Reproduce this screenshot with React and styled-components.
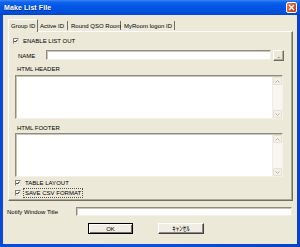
import React from "react";
import styled, { createGlobalStyle } from "styled-components";

const Global = createGlobalStyle`
  html, body { margin: 0; padding: 0; background: #ECE9D8; }
  body { font-family: "Liberation Sans", Arial, sans-serif; }
  * { box-sizing: border-box; }
`;

const Window = styled.div`
  width: 300px;
  height: 247px;
  display: flex;
  flex-direction: column;
  background: linear-gradient(90deg, #0A4AD8, #0A50DE 50%, #0742C8);
  overflow: hidden;
`;

const TitleBar = styled.div`
  height: 15px;
  flex: none;
  display: flex;
  align-items: center;
  justify-content: space-between;
  padding: 0 3px 0 4px;
  background: linear-gradient(#3A86F2 0%, #0F62EC 15%, #0055E4 45%, #0052DE 80%, #0445CC 100%);
`;

const Title = styled.span`
  color: #fff;
  font-weight: bold;
  font-size: 7px;
  line-height: 8px;
  letter-spacing: 0.1px;
  text-shadow: 0.5px 0.5px 0 #0B2A8A;
  white-space: nowrap;
`;

const CloseButton = styled.div`
  width: 11px;
  height: 11px;
  border: 1px solid #fff;
  border-radius: 2px;
  background: linear-gradient(135deg, #F08A62, #E1542C 45%, #C8401C);
  display: flex;
  align-items: center;
  justify-content: center;
`;

const Body = styled.div`
  flex: 1;
  margin: 0 3px 3px;
  background: #ECE9D8;
  display: flex;
  flex-direction: column;
  padding: 4px 4px 0 4px;
`;

const TabRow = styled.div`
  height: 12px;
  flex: none;
  display: flex;
  margin-left: 1px;
  position: relative;
  z-index: 1;
`;

const Tab = styled.div`
  width: ${(p) => p.$w}px;
  display: flex;
  align-items: center;
  padding-left: ${(p) => p.$pl}px;
  font-size: 6px;
  line-height: 6px;
  color: #000;
  white-space: nowrap;
  background: #ECE9D8;
  ${(p) =>
    p.$active
      ? `
    height: 13px;
    border-top: 1px solid #fff;
    border-left: 1px solid #fff;
    border-right: 1px solid #716F64;
    border-top-left-radius: 1px;
  `
      : `
    height: 9px;
    margin-top: 2px;
    border-right: 1px solid #716F64;
  `}
`;

const Panel = styled.div`
  margin-left: 1px;
  width: 285px;
  height: 170px;
  flex: none;
  border: 1px solid;
  border-color: #fff #716F64 #716F64 #fff;
  box-shadow: inset -1px -1px 0 #ACA899;
  display: flex;
  flex-direction: column;
  padding: 6px 0 0 6px;
`;

const CheckRow = styled.div`
  height: 6px;
  flex: none;
  display: flex;
  align-items: center;
  gap: 4px;
  margin-top: ${(p) => p.$mt || 0}px;
  margin-left: ${(p) => p.$ml || 0}px;
`;

const Box = styled.span`
  width: 6px;
  height: 6px;
  flex: none;
  background: #fff;
  border: 1px solid;
  border-color: #808080 #E6E3D6 #E6E3D6 #808080;
  display: flex;
  align-items: center;
  justify-content: center;
`;

const Text = styled.span`
  font-size: 6px;
  line-height: 6px;
  color: #000;
  white-space: nowrap;
  ${(p) => (p.$focus ? "outline: 1px dotted #555; outline-offset: 1px;" : "")}
`;

const NameRow = styled.div`
  margin-top: 6px;
  height: 11px;
  flex: none;
  display: flex;
  align-items: center;
`;

const FieldLabel = styled.span`
  width: ${(p) => p.$w}px;
  flex: none;
  padding-left: ${(p) => p.$pl || 0}px;
  font-size: 6px;
  line-height: 6px;
  white-space: nowrap;
  color: #000;
`;

const Input = styled.div`
  width: ${(p) => p.$w}px;
  height: ${(p) => p.$h}px;
  flex: none;
  align-self: ${(p) => p.$self || "center"};
  background: #fff;
  border: 1px solid;
  border-color: #8E8C82 #F4F2E8 #F4F2E8 #8E8C82;
  box-shadow: inset 1px 1px 0 #C9C6B8;
`;

const SmallButton = styled.div`
  width: 11px;
  height: 11px;
  flex: none;
  margin-left: 2px;
  background: #ECE9D8;
  border: 1px solid;
  border-color: #fff #716F64 #716F64 #fff;
  box-shadow: inset -1px -1px 0 #ACA899;
  display: flex;
  align-items: flex-end;
  justify-content: center;
  padding-bottom: 2px;
  font-size: 5px;
  line-height: 4px;
  color: #000;
  letter-spacing: -0.5px;
`;

const SectionLabel = styled.div`
  height: 8px;
  flex: none;
  margin-top: ${(p) => p.$mt}px;
  margin-left: 2px;
  font-size: 6px;
  line-height: 8px;
  color: #000;
  white-space: nowrap;
`;

const TextBox = styled.div`
  margin-top: ${(p) => p.$mt}px;
  width: 268px;
  height: 44px;
  flex: none;
  display: flex;
  background: #fff;
  border: 1px solid;
  border-color: #8E8C82 #F4F2E8 #F4F2E8 #8E8C82;
  box-shadow: inset 1px 1px 0 #C9C6B8;
`;

const TextArea = styled.div`
  flex: 1;
`;

const ScrollBar = styled.div`
  width: 10px;
  margin: 1px 0 0;
  background: #F7F6F0;
  border-left: 1px solid #EFEDE4;
  display: flex;
  flex-direction: column;
  justify-content: space-between;
`;

const ScrollArrow = styled.div`
  height: 8px;
  background: #F3F1E8;
  border: 1px solid #E4E1D5;
  border-radius: 1px;
  display: flex;
  align-items: center;
  justify-content: center;
`;

const NotifyRow = styled.div`
  margin-top: 6px;
  height: 9px;
  flex: none;
  display: flex;
  align-items: center;
`;

const ButtonRow = styled.div`
  margin-top: 7px;
  display: flex;
  gap: 25px;
  padding-left: 81px;
`;

const Button = styled.div`
  width: ${(p) => p.$w}px;
  height: 11px;
  display: flex;
  align-items: center;
  justify-content: center;
  background: #F0EEE4;
  font-size: 6px;
  line-height: 6px;
  color: #000;
  font-family: "Liberation Sans", "Noto Sans CJK JP", sans-serif;
  border: 1px solid;
  ${(p) =>
    p.$default
      ? `border-color: #000; box-shadow: inset 1px 1px 0 #fff, inset -1px -1px 0 #716F64;`
      : `border-color: #fff #404040 #404040 #fff; box-shadow: inset -1px -1px 0 #8E8C82;`}
`;

const Kana = styled.span`
  font-family: "Noto Sans CJK JP", sans-serif;
  font-size: 7px;
  line-height: 7px;
`;

const Check = () => (
  <svg width="4" height="4" viewBox="0 0 4 4">
    <polyline points="0.3,1.9 1.4,3.1 3.7,0.6" fill="none" stroke="#000" strokeWidth="1" />
  </svg>
);

const Arrow = ({ up }) => (
  <svg width="5" height="3" viewBox="0 0 5 3">
    <polyline
      points={up ? "0.5,2.5 2.5,0.5 4.5,2.5" : "0.5,0.5 2.5,2.5 4.5,0.5"}
      fill="none"
      stroke="#B9B6A8"
      strokeWidth="1"
    />
  </svg>
);

const MultiLine = ({ mt }) => (
  <TextBox $mt={mt}>
    <TextArea />
    <ScrollBar>
      <ScrollArrow>
        <Arrow up />
      </ScrollArrow>
      <ScrollArrow>
        <Arrow />
      </ScrollArrow>
    </ScrollBar>
  </TextBox>
);

export default function App() {
  return (
    <>
      <Global />
      <Window>
        <TitleBar>
          <Title>Make List File</Title>
          <CloseButton>
            <svg width="7" height="7" viewBox="0 0 7 7">
              <path d="M1 1 L6 6 M6 1 L1 6" stroke="#fff" strokeWidth="1.4" />
            </svg>
          </CloseButton>
        </TitleBar>
        <Body>
          <TabRow>
            <Tab $active $w={30} $pl={2}>Group ID</Tab>
            <Tab $w={30} $pl={2}>Active ID</Tab>
            <Tab $w={53} $pl={3}>Round QSO Room</Tab>
            <Tab $w={54} $pl={3}>MyRoom logon ID</Tab>
          </TabRow>
          <Panel>
            <CheckRow $ml={-2}>
              <Box><Check /></Box>
              <Text>ENABLE LIST OUT</Text>
            </CheckRow>
            <NameRow>
              <FieldLabel $w={31} $pl={3}>NAME</FieldLabel>
              <Input $w={225} $h={10} $self="flex-start" />
              <SmallButton>...</SmallButton>
            </NameRow>
            <SectionLabel $mt={4}>HTML HEADER</SectionLabel>
            <MultiLine mt={2} />
            <SectionLabel $mt={5}>HTML FOOTER</SectionLabel>
            <MultiLine mt={1} />
            <CheckRow $mt={3}>
              <Box><Check /></Box>
              <Text>TABLE LAYOUT</Text>
            </CheckRow>
            <CheckRow $mt={4}>
              <Box><Check /></Box>
              <Text $focus>SAVE CSV FORMAT</Text>
            </CheckRow>
          </Panel>
          <NotifyRow>
            <FieldLabel $w={69}>Notify Window Title</FieldLabel>
            <Input $w={216} $h={9} />
          </NotifyRow>
          <ButtonRow>
            <Button $w={45} $default>OK</Button>
            <Button $w={46}><Kana>ｷｬﾝｾﾙ</Kana></Button>
          </ButtonRow>
        </Body>
      </Window>
    </>
  );
}
